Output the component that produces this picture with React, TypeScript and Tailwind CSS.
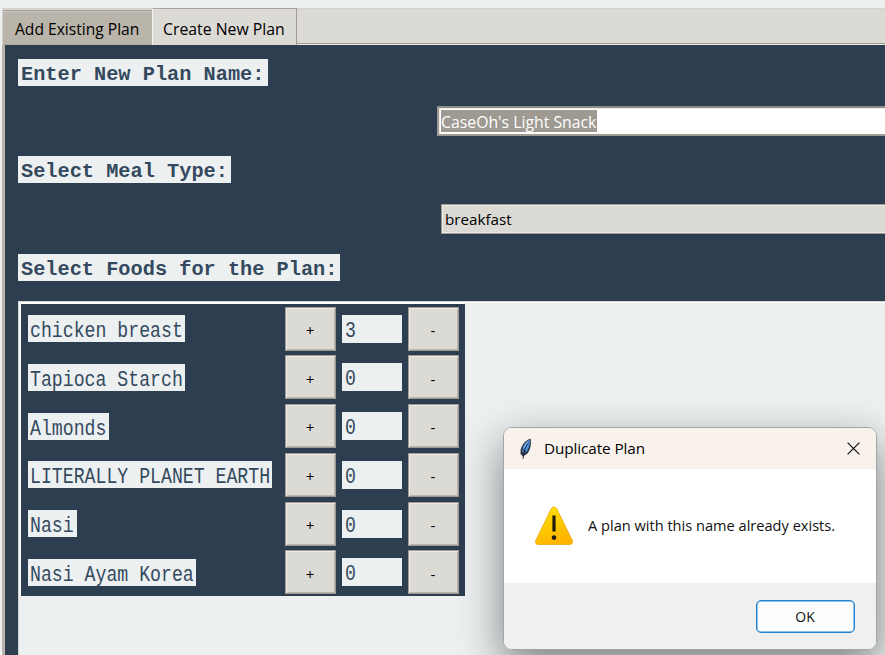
const foods = [
  { name: 'chicken breast', qty: 3, width: 157 },
  { name: 'Tapioca Starch', qty: 0, width: 157 },
  { name: 'Almonds', qty: 0, width: 81 },
  { name: 'LITERALLY PLANET EARTH', qty: 0, width: 244 },
  { name: 'Nasi', qty: 0, width: 49 },
  { name: 'Nasi Ayam Korea', qty: 0, width: 168 },
];

const mono = "font-['Liberation_Mono',monospace]";

function Heading({ text, width }: { text: string; width: number }) {
  return (
    <div
      className="flex h-[27px] items-center bg-[#ecf0f1] pt-[4px] pl-[3px] text-[#34495e]"
      style={{ width }}
    >
      <span className={`${mono} block origin-center scale-y-[1.04] text-[20.3px] leading-[27px] font-bold whitespace-pre`}>
        {text}
      </span>
    </div>
  );
}

function StepButton({ label }: { label: string }) {
  return (
    <button className="flex h-[44px] w-[51px] items-center justify-center border border-[#9e9a91] bg-[#dcdad5] pt-[3px] pr-px text-[15px] text-black shadow-[inset_1px_1px_0_#eeebe7,inset_-1px_-1px_0_#bab5ab]">
      {label}
    </button>
  );
}

function FoodRow({ name, qty, width }: { name: string; qty: number; width: number }) {
  return (
    <div className="flex h-[48.8px] items-start pt-[2.5px]">
      <div className="flex h-[44px] w-[264px] items-center pl-[7px]">
        <div className="h-[27px] bg-[#ecf0f1] pl-[2px]" style={{ width }}>
          <span className={`${mono} block scale-y-[1.2] text-[18.2px] leading-[32px] whitespace-pre text-[#34495e]`}>
            {name}
          </span>
        </div>
      </div>
      <StepButton label="+" />
      <div className="mt-[8px] ml-[6px] h-[28px] w-[60px] bg-[#ecf0f1] pl-[3px]">
        <span className={`${mono} block scale-y-[1.2] text-[18.2px] leading-[32px] text-[#34495e]`}>{qty}</span>
      </div>
      <div className="ml-[6px]">
        <StepButton label="-" />
      </div>
    </div>
  );
}

function Feather() {
  return (
    <svg width="14" height="22" viewBox="0 0 14 22">
      <path d="M11.6 .8C7 2 3 6 1.7 11.5L1.5 16L4 18.5L8.5 15.5C11 12 12.7 7 11.6 .8Z" fill="#2a3541" />
      <path d="M10.9 1.8C7 3.5 4 7 3 12L4 15.5L7.4 14C10 10 11.4 6 10.9 1.8Z" fill="#4f8fdc" />
      <path d="M9.5 4.5C7 7.5 5 12 4 20.8M3.2 11L5.2 12.5M4.6 14L7 13" fill="none" stroke="#111820" strokeWidth=".9" />
      <path d="M9.4 3.6C7.5 5.4 6 8 5.2 10" fill="none" stroke="#a9c9eb" strokeWidth=".8" />
    </svg>
  );
}

function WarningIcon() {
  return (
    <svg width="40" height="40" viewBox="0 0 40 40">
      <defs>
        <linearGradient id="warn" x1="0" y1="0" x2=".4" y2="1">
          <stop offset="0" stopColor="#ffe600" />
          <stop offset="1" stopColor="#ffb400" />
        </linearGradient>
      </defs>
      <path
        d="M17.3 2.6C18.4 .5 21.6 .5 22.7 2.6L38.3 34.5C39.2 36.5 38 38.5 35.8 38.5H4.2C2 38.5 .8 36.5 1.7 34.5Z"
        fill="url(#warn)"
        stroke="#e9a000"
        strokeWidth=".7"
      />
      <path d="M20 9.5V25.5" stroke="#201c10" strokeWidth="3.2" />
      <circle cx="20" cy="31.6" r="2.3" fill="#201c10" />
    </svg>
  );
}

function Dialog() {
  return (
    <div className="absolute top-[427px] left-[503px] flex h-[223px] w-[374px] flex-col overflow-hidden rounded-[9px] border border-[#a2a5a7] bg-white">
      <div className="flex h-[41px] shrink-0 items-center bg-[#f9f1ec] pl-[15px]">
        <Feather />
        <span className="ml-[11px] text-[15.3px] tracking-[-0.1px] whitespace-nowrap text-black">Duplicate Plan</span>
        <svg className="mr-[16px] ml-auto" width="13" height="13" viewBox="0 0 13 13">
          <path d="M.6 .6L12.4 12.4M12.4 .6L.6 12.4" stroke="#111" strokeWidth="1.2" />
        </svg>
      </div>
      <div className="flex h-[114px] shrink-0 items-center pl-[30px]">
        <WarningIcon />
        <span className="ml-[14px] text-[14.6px] whitespace-nowrap text-[#111]">A plan with this name already exists.</span>
      </div>
      <div className="flex flex-1 items-start justify-end bg-[#f0f0f0] pt-[17px] pr-[21px]">
        <button className="flex h-[33px] w-[99px] items-center justify-center rounded-[5px] border-[1.5px] border-[#2484d1] bg-[#fdfdfd] pr-px text-[14px] text-[#111] shadow-[inset_0_0_0_0.5px_#2484d1]">
          OK
        </button>
      </div>
    </div>
  );
}

export default function App() {
  return (
    <div className="relative flex h-[655px] w-[885px] flex-col overflow-hidden bg-[#ecf0f1] pt-[8px] pl-[2px] font-['Open_Sans',sans-serif] text-black">
      <div className="flex h-[37px] shrink-0 items-end border-t border-l border-[#d4d2cc] bg-[#dcdad5]">
        <div className="flex h-[35px] w-[149px] items-center border-t border-b border-[#9e9a91] border-b-[#b0aca4] bg-[#bab5ab] pt-[5px] pl-[12px] text-[15.6px] whitespace-nowrap shadow-[inset_0_1px_0_#cbc7be]">
          Add Existing Plan
        </div>
        <div className="flex h-[37px] w-[145px] items-center border-t border-r border-l border-t-[#aaa69e] border-r-[#9e9a91] border-l-[#f4f2ee] bg-[#dcdad5] pt-[6px] pl-[10px] text-[15.8px] whitespace-nowrap">
          Create New Plan
        </div>
        <div className="flex h-[36px] flex-1 flex-col justify-end">
          <div className="h-px bg-[#9e9a91]" />
          <div className="h-px bg-[#eeebe7]" />
        </div>
      </div>
      <div className="flex flex-1 flex-col border-l-[3px] border-[#bab5ab] bg-[#2c3e50] pt-[14px] pl-[13px]">
        <Heading text="Enter New Plan Name:" width={250} />
        <div className="mt-[20px] ml-[419px] flex h-[30px] items-center border-2 border-r-0 border-[#9e9a91] border-t-[#8f8d88] bg-white pl-[2px] shadow-[inset_1px_1px_0_#eeebe7]">
          <span className="h-[22px] w-[156px] bg-[#9e9a91] text-[15.8px] leading-[25px] whitespace-nowrap text-white">
            CaseOh's Light Snack
          </span>
        </div>
        <div className="mt-[20px]">
          <Heading text="Select Meal Type:" width={213} />
        </div>
        <div className="mt-[21px] ml-[423px] flex h-[30px] items-center border border-r-0 border-[#9e9a91] bg-[#dcdad5] pt-px pl-[3px] text-[15.2px] shadow-[inset_1px_1px_0_#eeebe7,inset_0_-1px_0_#eeebe7]">
          breakfast
        </div>
        <div className="mt-[20px]">
          <Heading text="Select Foods for the Plan:" width={322} />
        </div>
        <div className="mt-[20px] flex-1 border-t border-l border-[#d4d4d2] bg-[#ecf0f1] pt-[2px] pl-[2px] shadow-[inset_0_1px_0_white]">
          <div className="h-[292px] w-[444px] bg-[#2c3e50] shadow-[-1px_-1px_0_white]">
            {foods.map((food) => (
              <FoodRow key={food.name} {...food} />
            ))}
          </div>
        </div>
      </div>
      <div className="absolute top-[427px] left-[503px] h-[223px] w-[374px] rounded-[9px] shadow-[0_16px_44px_rgba(0,0,0,0.48)]" />
      <Dialog />
    </div>
  );
}
